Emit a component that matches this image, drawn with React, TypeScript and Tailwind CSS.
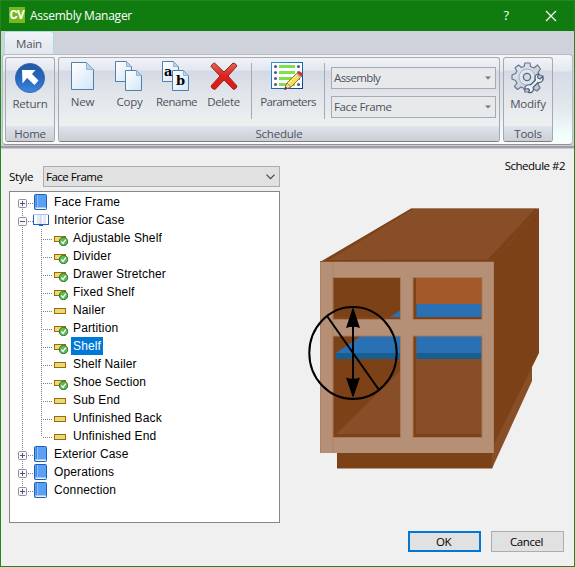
import React from "react";

type Node = { label: string; root?: boolean; open?: boolean; checked?: boolean; selected?: boolean; last?: boolean };

const nodes: Node[] = [
  { label: "Face Frame", root: true },
  { label: "Interior Case", root: true, open: true },
  { label: "Adjustable Shelf", checked: true },
  { label: "Divider", checked: true },
  { label: "Drawer Stretcher", checked: true },
  { label: "Fixed Shelf", checked: true },
  { label: "Nailer" },
  { label: "Partition", checked: true },
  { label: "Shelf", checked: true, selected: true },
  { label: "Shelf Nailer" },
  { label: "Shoe Section", checked: true },
  { label: "Sub End" },
  { label: "Unfinished Back" },
  { label: "Unfinished End", last: true },
  { label: "Exterior Case", root: true },
  { label: "Operations", root: true },
  { label: "Connection", root: true, last: true },
];

const dots = { stroke: "#808080", strokeWidth: 1, strokeDasharray: "1 1" };

function RootGlyph({ node, first }: { node: Node; first: boolean }) {
  return (
    <svg width="42" height="18" className="shrink-0">
      <path d={first ? "M12.5 14V18" : node.last ? "M12.5 0V6" : "M12.5 0V18"} {...dots} />
      <path d="M18 10.5H24" {...dots} />
      <rect x="8.5" y="6.5" width="8" height="8" rx="1" fill="#f8f8f8" stroke="#919191" />
      <path d={node.open ? "M10 10.5H15" : "M10 10.5H15M12.5 8V13"} stroke="#3f5799" />
      {node.open ? (
        <g>
          <path d="M23.5 3.5H38.5V13.5H23.5Z" fill="#fff" stroke="#a9c6ee" />
          <path d="M27 4H31V13H27Z" fill="#e3ebf7" />
          <path d="M33 4H36V13H33Z" fill="#e3ebf7" />
          <path d="M31 4V13" stroke="#b4cdec" />
          <path d="M23 13.5H39M29 14.5H33M23.5 4V14M38.5 4V14" stroke="#2160bc" />
        </g>
      ) : (
        <g>
          <rect x="24.5" y="1.5" width="12" height="15" rx="1" fill="#5aa0f5" stroke="#1c5fb8" />
          <path d="M26.5 2V14" stroke="#4388dc" />
          <path d="M27.5 2V14" stroke="#8bc0fa" />
          <path d="M26 15.5H36" stroke="#eef3fb" />
          <path d="M25 14.5H36" stroke="#a9c8f0" />
        </g>
      )}
    </svg>
  );
}

function LeafGlyph({ node }: { node: Node }) {
  return (
    <svg width="61" height="18" className="shrink-0">
      <path d="M12.5 0V18" {...dots} />
      <path d={node.last ? "M31.5 0V10" : "M31.5 0V18"} {...dots} />
      <path d="M33 10.5H42" {...dots} />
      <rect x="44.5" y="7.5" width="11" height="5" fill="#e3dc7c" stroke="#a76600" />
      {node.checked && (
        <g>
          <circle cx="53.5" cy="12.5" r="4.1" fill="#5cb957" stroke="#2c7a2e" />
          <path d="M51.3 12.6L53 14.4L55.8 10.6" fill="none" stroke="#fff" strokeWidth="1.4" />
        </g>
      )}
    </svg>
  );
}

function Page({ x, y, w, h, id }: { x: number; y: number; w: number; h: number; id: string }) {
  const c = w > 20 ? 7 : 5;
  return (
    <g>
      <defs>
        <linearGradient id={id} x1="0" y1="0" x2="1" y2="1">
          <stop offset="0" stopColor="#fff" />
          <stop offset="1" stopColor="#d1e6f8" />
        </linearGradient>
      </defs>
      <path d={`M${x} ${y}H${x + w - c}L${x + w} ${y + c}V${y + h}H${x}Z`} fill={`url(#${id})`} stroke="#557fa8" />
      <path d={`M${x + w - c} ${y}V${y + c}H${x + w}Z`} fill="#b9d2ec" stroke="#86a9cc" strokeWidth=".8" />
    </g>
  );
}

const NewIcon = () => (
  <svg width="32" height="32">
    <Page x={4.5} y={1.5} w={22} h={27} id="new" />
  </svg>
);
const CopyIcon = () => (
  <svg width="32" height="32">
    <Page x={1.5} y={0.5} w={16} h={20} id="cp1" />
    <Page x={11.5} y={9.5} w={16} h={20} id="cp2" />
  </svg>
);
const RenameIcon = () => (
  <svg width="32" height="32">
    <Page x={1.5} y={0.5} w={16} h={20} id="rn1" />
    <Page x={11.5} y={9.5} w={16} h={20} id="rn2" />
    <g fontFamily="'DejaVu Serif', serif" fontWeight="bold" fontSize="13" fill="#000">
      <text x="3" y="15">a</text>
      <text x="15" y="24">b</text>
    </g>
  </svg>
);
const DeleteIcon = () => (
  <svg width="32" height="32">
    <defs>
      <linearGradient id="del" x1="0" y1="0" x2="0" y2="1">
        <stop offset="0" stopColor="#df6650" />
        <stop offset=".5" stopColor="#d92420" />
        <stop offset="1" stopColor="#e91414" />
      </linearGradient>
    </defs>
    <path
      d="M6.5 2L16 11L25 2Q27.5 2 29 5L20 15L29 25Q28.5 28 25.500 28.500L16 19L7 28.500Q3.500 28 3 25L12 15L3 5.500Q3.500 3 6.500 2Z"
      fill="url(#del)"
      stroke="#98261c"
      strokeLinejoin="round"
    />
  </svg>
);
const ParametersIcon = () => (
  <svg width="34" height="32">
    <defs>
      <linearGradient id="prm" x1="0" y1="0" x2="1" y2="1">
        <stop offset="0" stopColor="#329ade" />
        <stop offset="1" stopColor="#0c3f93" />
      </linearGradient>
    </defs>
    <rect x="0.500" y="1.500" width="31" height="26" fill="#fff" stroke="url(#prm)" />
    {[4, 10, 16, 22].map((y) => (
      <g key={y}>
        <rect x="8" y={y} width="16" height="3" fill="#7ee04c" />
        <circle cx="4.500" cy={y + 1.500} r="1.500" fill="#52549a" />
        <circle cx="27.500" cy={y + 1.500} r="1.500" fill="#52549a" />
      </g>
    ))}
    <path d="M13.500 28.500L16 22L26 12L30 16L20 26Z" fill="#f7df55" stroke="#8c6520" strokeWidth=".9" />
    <path d="M17 23L27 13" stroke="#fff5ad" />
    <path d="M13.500 28.500L16 22L20 26Z" fill="#f5d9ae" stroke="#8c6520" strokeWidth=".6" />
    <path d="M13.500 28.500L14.600 25.600L16.600 27.500Z" fill="#333" />
    <path d="M25 13L27 11L31 15L29 17Z" fill="#aac2d8" />
    <path d="M26 12Q28 9.500 30.500 11.500Q32.500 14 30.500 16Z" fill="#dc3328" />
  </svg>
);
const ReturnIcon = () => (
  <svg width="32" height="32">
    <defs>
      <linearGradient id="ret" x1="0" y1="0" x2="0" y2="1">
        <stop offset="0" stopColor="#2458a4" />
        <stop offset=".5" stopColor="#2665bd" />
        <stop offset="1" stopColor="#3d88e0" />
      </linearGradient>
    </defs>
    <circle cx="16" cy="16" r="14.600" fill="url(#ret)" stroke="#2a62b0" strokeWidth=".8" />
    <path d="M8 8H21.500L18 12L24.500 18.500L20.500 23L13 16L8.500 21.500Z" fill="#fff" />
  </svg>
);
const ModifyIcon = () => (
  <svg width="34" height="34">
    <defs>
      <linearGradient id="gear" x1="0" y1="0" x2="1" y2="1">
        <stop offset="0" stopColor="#e6ebf3" />
        <stop offset="1" stopColor="#b5c0d0" />
      </linearGradient>
    </defs>
    <path
      d="M14 2H19L19.500 5.500L23 7L26.500 4L29.500 8L27 11.500L28.500 14L32 15V19L28 20L27 23L29 27L26 30L22.500 28L19 29L18.500 31H14L13 27.500L10 26L6.500 28.500L3.500 25.500L6 22L4.500 19.500L1 18V14L4.500 12.500L6 10L4 7L7.500 4L10.500 6.500L13 5.500Z"
      fill="url(#gear)"
      stroke="#68778c"
      strokeWidth="1.200"
      strokeLinejoin="round"
    />
    <circle cx="16" cy="16" r="8" fill="#e0e6ee" stroke="#a4afbf" />
    <circle cx="16" cy="16" r="3.600" fill="#d4dbe5" stroke="#59687f" strokeWidth="1.300" />
    <path
      d="M28 13Q24 13 24 17L24.500 19L19.500 24Q16 23 14 26V28.500L17 27.500L18.500 29L17.500 31.500Q21 32.500 22.500 29L22 26.500L27 21.500Q32 22 32 17L31.500 15.500L29 18L27 17L26.500 15.500Z"
      fill="#edf1f6"
      stroke="#4f6079"
      strokeWidth="1.200"
      strokeLinejoin="round"
    />
  </svg>
);

function Group({ title, className, children }: { title: string; className: string; children: React.ReactNode }) {
  return (
    <div
      className={`flex h-[85px] flex-col overflow-hidden rounded-[3px] border border-[#a7a9ad] border-b-[#7c7e80] bg-[linear-gradient(#f0f2f7_0,#e3e7ef_12px,#d4d9e5_13px,#e2e5ea_36px,#ecf1f0_68px)] ${className}`}
    >
      <div className="flex h-[68px] shrink-0 items-start">{children}</div>
      <div className="h-[15px] bg-[linear-gradient(#dfe3ee,#cbced3)] text-center leading-[16px]">{title}</div>
    </div>
  );
}

function Tool({ label, className, children }: { label: string; className: string; children: React.ReactNode }) {
  return (
    <div className={`flex shrink-0 flex-col items-center whitespace-nowrap leading-[18px] ${className}`}>
      {children}
      <span>{label}</span>
    </div>
  );
}

function RibbonSelect({ value, className }: { value: string; className: string }) {
  return (
    <div className="flex h-[22px] w-[165px] items-center justify-between border border-[#a3abb4] bg-[#e7e9eb] pl-[2px] pr-1 leading-[20px]">
      <span className={className}>{value}</span>
      <svg width="6" height="4">
        <path d="M0 0.500H6L3 3.500Z" fill="#72787f" />
      </svg>
    </div>
  );
}

function Cabinet() {
  return (
    <svg width="245" height="275" viewBox="300 200 245 275">
      <path d="M337 450H494V463L492 468.500H337Z" fill="#7c4117" />
      <path d="M492 468.500V441L532 360V381Z" fill="#884e28" />
      <path d="M494 261L539 208V353L494 444Z" fill="#7c4117" />
      <path d="M320 262L411 208.500H539L494 262Z" fill="#7c4117" />
      <path d="M329 260L413 209H535L488 259.500Z" fill="#884e28" />
      <path d="M411 208.500H537" stroke="#a48068" />
      <rect x="320" y="261.500" width="174" height="191.500" fill="#b59076" />
      <path d="M320.500 262V453M333 262V453M493.500 262V453" stroke="#aa8062" strokeWidth=".8" />
      <path d="M320 261.500H494" stroke="#8c512a" />

      <rect x="333" y="277.500" width="67.500" height="42" fill="#7c4117" />
      <path d="M390 317L400 310.500V317Z" fill="#2970b4" />
      <path d="M334 318H400" stroke="#8a4d25" />
      <rect x="413" y="277.500" width="69" height="42" fill="#7c4117" />
      <rect x="416" y="278" width="65.500" height="26" fill="#a35929" />
      <rect x="416.500" y="304" width="65" height="13" fill="#2970b4" />

      <rect x="333" y="336" width="67.500" height="101" fill="#7c4117" />
      <path d="M336 434L400 371V434Z" fill="#884e28" />
      <path d="M336 353L361 336H400V353Z" fill="#2970b4" />
      <rect x="336" y="353" width="64.500" height="6" fill="#195e91" />
      <rect x="413" y="336" width="69" height="101" fill="#7c4117" />
      <rect x="416" y="336" width="65.500" height="98" fill="#884e28" />
      <rect x="416.500" y="336" width="65" height="17" fill="#2970b4" />
      <rect x="416.500" y="353" width="65" height="6" fill="#195e91" />
      <g fill="none" stroke="#aa7b59">
        <rect x="333" y="277.500" width="67.500" height="42" />
        <rect x="413" y="277.500" width="69" height="42" />
        <rect x="333" y="336" width="67.500" height="101.500" />
        <rect x="413" y="336" width="69" height="101.500" />
      </g>
      <g fill="none" stroke="#000" strokeWidth="2">
        <ellipse cx="353" cy="353" rx="43.700" ry="46" />
        <path d="M327 316L379 390M353 320V385" />
      </g>
      <path d="M353 307L360 328Q353 325.500 346 328ZM353 398L360 377.500Q353 380 346 377.500Z" />
    </svg>
  );
}

export default function App() {
  return (
    <div className="flex h-[567px] w-[575px] flex-col overflow-hidden border border-[#23861f] bg-[#f0f0f0] font-['Open_Sans','Noto_Sans',sans-serif] text-[11.5px] text-black">
      <header className="flex h-[30px] shrink-0 items-center bg-[#107c10] pl-2 text-white">
        <div className="mb-[2px] flex h-4 w-4 items-center justify-center bg-[#75b91e] font-['Roboto',sans-serif] text-[12px] font-bold tracking-[-0.7px]">CV</div>
        <h1 className="ml-[5px] grow text-[12px] tracking-[-0.25px]">Assembly Manager</h1>
        <span className="mr-[36px] text-[13px]">?</span>
        <svg width="12" height="12" className="mr-[17px]">
          <path d="M1 1L11 11M11 1L1 11" stroke="#fff" strokeWidth="1.200" />
        </svg>
      </header>

      <div className="flex h-[118px] shrink-0 flex-col bg-[#cfd2da] tracking-[-0.22px] text-[#4c535c]">
        <div className="flex h-[23px] shrink-0 items-end pl-[3px]">
          <div className="h-[23px] w-[50px] rounded-t-[3px] border border-b-0 border-[#a9dce2] bg-[linear-gradient(#f0f3f7,#e3e7ef)] text-center leading-[23px]">Main</div>
        </div>
        <div className="mx-[1px] flex h-[91px] shrink-0 gap-[3px] rounded-[4px] border border-[#b7babf] border-b-[#909399] bg-[linear-gradient(#f4f6f9_0,#e4e8f0_16px,#d5dbe7_17px,#e4e9ed_55px,#f2ffff_82px,#fafafa_88px)] pl-[2px] pt-[2px]">
          <Group title="Home" className="w-[50px]">
            <Tool label="Return" className="w-12 pt-[4px]">
              <ReturnIcon />
              <span className="h-[1px]" />
            </Tool>
          </Group>
          <Group title="Schedule" className="w-[442px]">
            <Tool label="New" className="w-[47px] pt-[3px]"><NewIcon /></Tool>
            <Tool label="Copy" className="w-[47px] pt-[3px]"><CopyIcon /></Tool>
            <Tool label="Rename" className="w-[47px] pt-[3px] tracking-[-0.5px]"><RenameIcon /></Tool>
            <Tool label="Delete" className="w-[47px] pt-[3px] tracking-[-0.35px]"><DeleteIcon /></Tool>
            <div className="ml-[4px] mt-[5px] h-[56px] w-px bg-[#a5abb3]" />
            <Tool label="Parameters" className="w-[72px] pt-[3px] tracking-[-0.68px]"><ParametersIcon /></Tool>
            <div className="mt-[5px] h-[56px] w-px bg-[#a5abb3]" />
            <div className="ml-[6px] mt-[9px] flex shrink-0 flex-col gap-[7px]">
              <RibbonSelect value="Assembly" className="tracking-[-0.6px]" />
              <RibbonSelect value="Face Frame" className="tracking-[-0.38px]" />
            </div>
          </Group>
          <Group title="Tools" className="w-[50px]">
            <Tool label="Modify" className="w-12 pt-[3px]"><ModifyIcon /></Tool>
          </Group>
        </div>
        <div className="h-px bg-[#caccd0]" />
        <div className="h-[2px] bg-[#9da0a7]" />
        <div className="h-px bg-[#c9cbce]" />
      </div>

      <main className="flex h-[374px] shrink-0 pl-2">
        <section className="flex w-[271px] shrink-0 flex-col">
          <div className="mt-[17px] flex h-[21px] shrink-0 items-center">
            <label className="w-[34px] tracking-[-0.25px]">Style</label>
            <div className="flex h-[21px] w-[237px] items-center justify-between border border-[#adadad] bg-[#e1e1e1] pl-[2px] pr-1 tracking-[-0.5px]">
              Face Frame
              <svg width="9" height="6">
                <path d="M.5 .7L4.500 4.700L8.500 .7" fill="none" stroke="#444" strokeWidth="1.200" />
              </svg>
            </div>
          </div>
          <div className="mt-[4px] h-[332px] w-[271px] shrink-0 border border-[#828790] bg-white pt-px font-['Liberation_Sans',Arial,sans-serif] text-[12px]">
            {nodes.map((n, i) => (
              <div key={n.label} className="flex h-[18px]">
                {n.root ? <RootGlyph node={n} first={i === 0} /> : <LeafGlyph node={n} />}
                <span className={`px-[2px] leading-[18px] tracking-[0.14px] ${n.selected ? "bg-[#0078d7] text-white" : ""}`}>{n.label}</span>
              </div>
            ))}
          </div>
        </section>
        <section className="flex grow flex-col">
          <div className="mr-[9px] mt-[8px] h-[16px] text-right leading-[17px] tracking-[-0.5px]">Schedule #2</div>
          <div className="ml-[20px] mt-[27px]"><Cabinet /></div>
        </section>
      </main>
      <footer className="flex justify-end gap-[10px] pr-[10px] pt-[8px] tracking-[-0.4px]">
        <button className="h-[21px] w-[73px] border-2 border-[#0078d7] bg-[#e1e1e1] pr-[2px] leading-[17px]">OK</button>
        <button className="h-[21px] w-[73px] border border-[#adadad] bg-[#e1e1e1] pr-[2px] leading-[19px]">Cancel</button>
      </footer>
    </div>
  );
}
